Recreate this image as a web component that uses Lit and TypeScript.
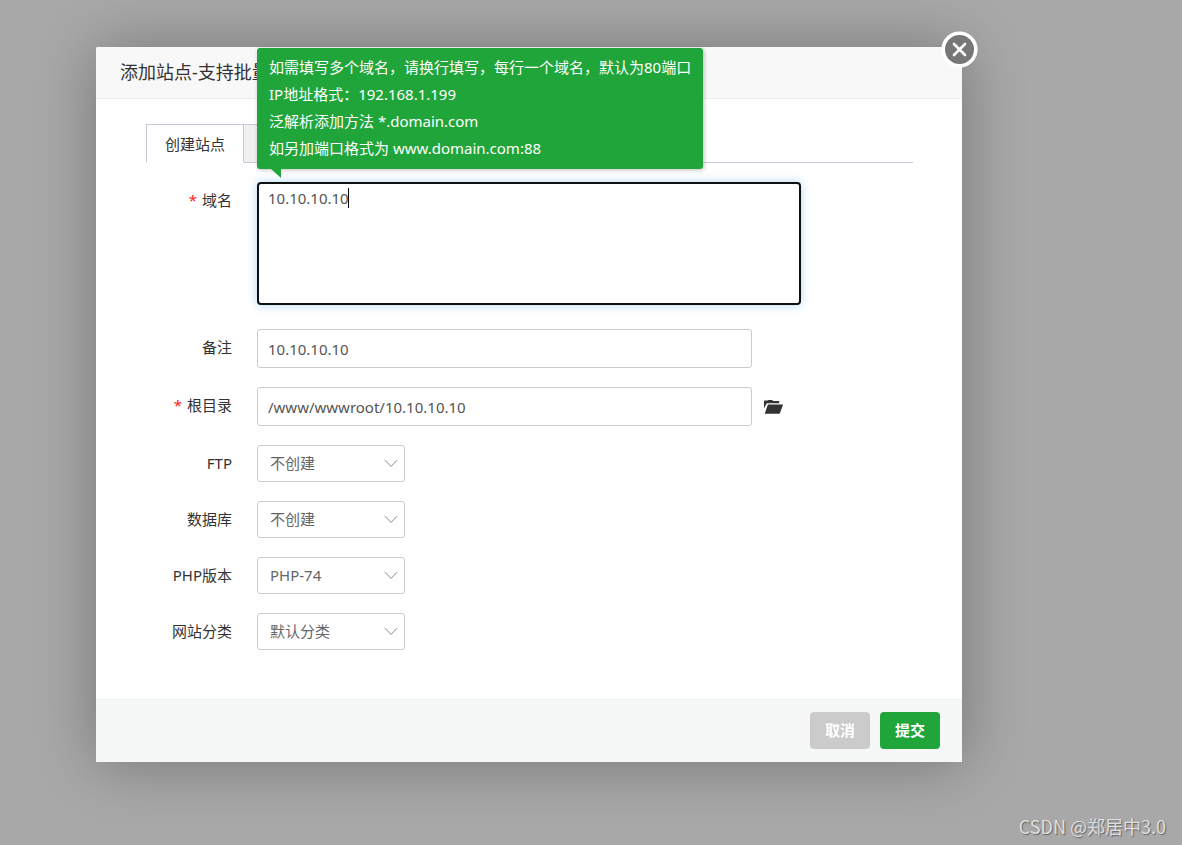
import { LitElement, html, css } from "lit";
import { customElement, property } from "lit/decorators.js";

const control = css`
  * {
    box-sizing: border-box;
  }
  button,
  input,
  select,
  textarea {
    margin: 0;
    font: inherit;
    color: inherit;
  }
`;

@customElement("form-row")
class FormRow extends LitElement {
  static styles = css`
    :host {
      display: grid;
      grid-template-columns: 86px minmax(0, 1fr);
      column-gap: 25px;
      align-items: start;
    }
  `;
  render() {
    return html`<slot></slot>`;
  }
}

interface Choice {
  id: string;
  label: string;
  value: string;
}

@customElement("site-form")
class SiteForm extends LitElement {
  @property({ attribute: false }) choices: Choice[] = [
    { id: "ftp", label: "FTP", value: "不创建" },
    { id: "database", label: "数据库", value: "不创建" },
    { id: "php", label: "PHP版本", value: "PHP-74" },
    { id: "category", label: "网站分类", value: "默认分类" },
  ];

  static styles = [
    control,
    css`
      :host {
        display: block;
      }
      .form {
        display: flex;
        flex-direction: column;
        gap: 19px;
      }
      .label {
        text-align: right;
        line-height: 37px;
        color: #333;
      }
      .required {
        color: #f22;
        margin-right: 5px;
      }
      .domain {
        position: relative;
        width: 100%;
        max-width: 544px;
        margin-bottom: 5px;
      }
      .area {
        display: block;
        width: 100%;
        height: 123px;
        padding: 2px 9px;
        line-height: 24px;
        border: 2px solid #101010;
        border-radius: 4px;
        resize: none;
        outline: none;
        background: #fff;
        color: #555;
        box-shadow: 0 0 10px rgba(102, 175, 233, 0.5);
      }
      .caret {
        position: absolute;
        left: 91px;
        top: 6px;
        width: 1px;
        height: 20px;
        background: #000;
      }
      .tip {
        position: absolute;
        left: 0;
        bottom: 136px;
        padding: 6px 12px 7px;
        line-height: 27px;
        white-space: nowrap;
        color: #fff;
        background: #20a53a;
        border-radius: 3px;
        box-shadow: 1px 1px 4px rgba(0, 0, 0, 0.25);
      }
      .arrow {
        position: absolute;
        left: 14px;
        top: 100%;
        width: 10px;
        height: 9px;
        fill: #20a53a;
      }
      .line {
        display: flex;
        align-items: center;
        gap: 12px;
      }
      .input {
        width: 100%;
        max-width: 495px;
        height: 39px;
        padding: 0 10px;
        border: 1px solid #ccc;
        border-radius: 3px;
        background: #fff;
        color: #555;
        outline: none;
      }
      .folder {
        display: flex;
        padding: 0;
        border: 0;
        background: none;
        color: #333;
        cursor: pointer;
      }
      .pick {
        display: grid;
        width: 148px;
        align-items: center;
      }
      .select {
        grid-area: 1 / 1;
        width: 100%;
        height: 37px;
        padding: 0 12px 2px;
        appearance: none;
        border: 1px solid #ccc;
        border-radius: 3px;
        background: #fff;
        color: #666;
      }
      .chevron {
        grid-area: 1 / 1;
        justify-self: end;
        margin-right: 7px;
        pointer-events: none;
      }
    `,
  ];

  render() {
    return html`
      <form class="form" @submit=${(e: Event) => e.preventDefault()}>
        <form-row>
          <label class="label" for="domain"><span class="required">*</span>域名</label>
          <div class="domain">
            <textarea class="area" id="domain" spellcheck="false" .value=${"10.10.10.10"}></textarea>
            <span class="caret"></span>
            <div class="tip" role="tooltip">
              <div>如需填写多个域名，请换行填写，每行一个域名，默认为80端口</div>
              <div>IP地址格式：192.168.1.199</div>
              <div>泛解析添加方法 *.domain.com</div>
              <div>如另加端口格式为 www.domain.com:88</div>
              <svg class="arrow" viewBox="0 0 10 9"><path d="M0 0H10V9Z" /></svg>
            </div>
          </div>
        </form-row>
        <form-row>
          <label class="label" for="remark">备注</label>
          <div class="line"><input class="input" id="remark" type="text" value="10.10.10.10" /></div>
        </form-row>
        <form-row>
          <label class="label" for="root"><span class="required">*</span>根目录</label>
          <div class="line">
            <input class="input" id="root" type="text" value="/www/wwwroot/10.10.10.10" />
            <button class="folder" type="button" aria-label="选择目录">
              <svg width="20" height="16" viewBox="0 0 20 16" fill="currentColor">
                <path d="M0 9.5V2.2Q0 1.6.6 1.6H3.6L4.4.9H8.2L9 1.9H14.6Q15.2 1.9 15.2 2.6V4.3H3.4Q2.6 4.3 2.3 5Z" />
                <path d="M3.9 5.5H19.1L15.9 14.2Q15.7 14.8 15.1 14.8H.7Z" />
              </svg>
            </button>
          </div>
        </form-row>
        ${this.choices.map(
          (c) => html`
            <form-row>
              <label class="label" for=${c.id}>${c.label}</label>
              <div class="pick">
                <select class="select" id=${c.id}>
                  <option>${c.value}</option>
                </select>
                <svg class="chevron" width="14" height="9" viewBox="0 0 14 9" fill="none" stroke="#888">
                  <path d="M1 1.2L7 7.5L13 1.2" />
                </svg>
              </div>
            </form-row>
          `
        )}
      </form>
    `;
  }
}

@customElement("app-root")
class AppRoot extends LitElement {
  static styles = [
    control,
    css`
      :host {
        display: flex;
        flex-direction: column;
        box-sizing: border-box;
        min-height: 100vh;
        padding: 47px 16px 6px 96px;
        background: #a8a8a8;
        color: #333;
        font-family: "Noto Sans", "Noto Sans CJK SC", sans-serif;
        font-size: 15px;
        line-height: 24px;
      }
      .dialog {
        position: relative;
        margin-right: 204px;
        background: #fff;
        border-radius: 2px;
        box-shadow: 1px 1px 62px rgba(0, 0, 0, 0.3);
      }
      .head {
        padding: 0 24px;
        border-bottom: 1px solid #eee;
        border-radius: 2px 2px 0 0;
        background: #f8f8f8;
      }
      .title {
        margin: 0;
        font-size: 18px;
        font-weight: 400;
        line-height: 51px;
      }
      .close {
        position: absolute;
        top: -16px;
        right: -16px;
        display: flex;
        padding: 0;
        border: 0;
        background: none;
        cursor: pointer;
      }
      .body {
        padding: 25px 49px 49px 50px;
      }
      .tabs {
        display: flex;
        margin-bottom: 19px;
        box-shadow: inset 0 -1px #c8c8d8;
      }
      .tab {
        height: 39px;
        min-width: 98px;
        padding: 0 18px;
        border: 1px solid #c8c8d8;
        border-left: 0;
        background: #f0f0f0;
      }
      .tab.active {
        border-left: 1px solid #c8c8d8;
        border-bottom-color: #fff;
        background: #fff;
      }
      .foot {
        display: flex;
        justify-content: flex-end;
        gap: 10px;
        padding: 12px 22px 13px;
        border-top: 1px solid #edf1f2;
        background: #f6f8f8;
      }
      .btn {
        height: 37px;
        padding: 0 15px 2px;
        border: 0;
        border-radius: 4px;
        background: #cbcbcb;
        color: #fff;
        font-weight: 700;
      }
      .btn.primary {
        background: #20a53a;
      }
      .mark {
        margin-top: auto;
        text-align: right;
        font-family: "Noto Sans CJK SC", sans-serif;
        font-size: 18px;
        line-height: 26px;
        color: #dedede;
        text-shadow: 1px 1px 1px #666;
      }
    `,
  ];

  render() {
    return html`
      <section class="dialog" role="dialog" aria-labelledby="title">
        <header class="head"><h1 class="title" id="title">添加站点-支持批量</h1></header>
        <div class="body">
          <div class="tabs" role="tablist">
            <button class="tab active" role="tab" aria-selected="true">创建站点</button>
            <button class="tab" role="tab" aria-selected="false" aria-label="批量创建"></button>
          </div>
          <site-form></site-form>
        </div>
        <footer class="foot">
          <button class="btn">取消</button>
          <button class="btn primary">提交</button>
        </footer>
        <button class="close" aria-label="关闭">
          <svg width="37" height="37" viewBox="0 0 37 37">
            <circle cx="18.5" cy="18.5" r="16.3" fill="#777" stroke="#fff" stroke-width="3.6" />
            <path d="M13 13L24 24M24 13L13 24" stroke="#fff" stroke-width="2.6" stroke-linecap="round" />
          </svg>
        </button>
      </section>
      <div class="mark">CSDN @郑居中3.0</div>
    `;
  }
}
